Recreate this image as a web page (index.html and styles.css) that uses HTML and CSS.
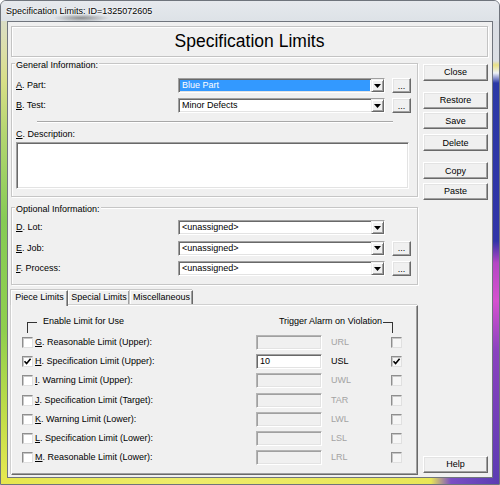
FILE: index.html
```html
<!DOCTYPE html>
<html lang="en">
<head>
  <meta charset="UTF-8">
  <title>Specification Limits</title>
  <link rel="stylesheet" href="styles.css">
</head>
<body>

  <div class="window">
    <div class="titlebar">Specification Limits: ID=1325072605</div>

    <div class="client">
      <div class="banner">Specification Limits</div>

      <div class="main">
        <div class="left">

          <div class="group general">
            <div class="group-title">General Information:</div>
            <div class="field-row first">
              <span class="field-label"><u>A</u>. Part:</span>
              <div class="combo selected">
                <span class="combo-text">Blue Part</span>
                <span class="combo-btn"><svg width="7" height="4" viewBox="0 0 7 4"><path d="M0 0h7L3.5 4z" fill="#000"/></svg></span>
              </div>
              <button class="dots" type="button">...</button>
            </div>
            <div class="field-row">
              <span class="field-label"><u>B</u>. Test:</span>
              <div class="combo">
                <span class="combo-text">Minor Defects</span>
                <span class="combo-btn"><svg width="7" height="4" viewBox="0 0 7 4"><path d="M0 0h7L3.5 4z" fill="#000"/></svg></span>
              </div>
              <button class="dots" type="button">...</button>
            </div>
            <div class="separator"></div>
            <span class="field-label desc-label"><u>C</u>. Description:</span>
            <div class="textarea"></div>
          </div>

          <div class="group optional">
            <div class="group-title">Optional Information:</div>
            <div class="field-row first">
              <span class="field-label"><u>D</u>. Lot:</span>
              <div class="combo">
                <span class="combo-text">&lt;unassigned&gt;</span>
                <span class="combo-btn"><svg width="7" height="4" viewBox="0 0 7 4"><path d="M0 0h7L3.5 4z" fill="#000"/></svg></span>
              </div>
            </div>
            <div class="field-row loose">
              <span class="field-label"><u>E</u>. Job:</span>
              <div class="combo">
                <span class="combo-text">&lt;unassigned&gt;</span>
                <span class="combo-btn"><svg width="7" height="4" viewBox="0 0 7 4"><path d="M0 0h7L3.5 4z" fill="#000"/></svg></span>
              </div>
              <button class="dots" type="button">...</button>
            </div>
            <div class="field-row loose">
              <span class="field-label"><u>F</u>. Process:</span>
              <div class="combo">
                <span class="combo-text">&lt;unassigned&gt;</span>
                <span class="combo-btn"><svg width="7" height="4" viewBox="0 0 7 4"><path d="M0 0h7L3.5 4z" fill="#000"/></svg></span>
              </div>
              <button class="dots" type="button">...</button>
            </div>
          </div>

          <div class="tabs">
            <div class="tab active tab-piece">Piece Limits</div>
            <div class="tab tab-special">Special Limits</div>
            <div class="tab tab-misc">Miscellaneous</div>
          </div>

          <div class="panel">
            <div class="limit-head">
              <span class="bracket left"></span>
              <span class="head-text">Enable Limit for Use</span>
              <span class="head-text trigger">Trigger Alarm on Violation</span>
              <span class="bracket right"></span>
            </div>

            <div class="limit-row">
              <span class="check"></span>
              <span class="limit-label"><u>G</u>. Reasonable Limit (Upper):</span>
              <span class="value"></span>
              <span class="abbr">URL</span>
              <span class="check alarm"></span>
            </div>
            <div class="limit-row">
              <span class="check"><svg width="9" height="9" viewBox="0 0 9 9"><path d="M1.5 4.2 3.6 6.5 7.6 1.8" fill="none" stroke="#000" stroke-width="1.6"/></svg></span>
              <span class="limit-label"><u>H</u>. Specification Limit (Upper):</span>
              <span class="value on">10</span>
              <span class="abbr on">USL</span>
              <span class="check alarm"><svg width="9" height="9" viewBox="0 0 9 9"><path d="M1.5 4.2 3.6 6.5 7.6 1.8" fill="none" stroke="#000" stroke-width="1.6"/></svg></span>
            </div>
            <div class="limit-row">
              <span class="check"></span>
              <span class="limit-label"><u>I</u>. Warning Limit (Upper):</span>
              <span class="value"></span>
              <span class="abbr">UWL</span>
              <span class="check alarm"></span>
            </div>
            <div class="limit-row">
              <span class="check"></span>
              <span class="limit-label"><u>J</u>. Specification Limit (Target):</span>
              <span class="value"></span>
              <span class="abbr">TAR</span>
              <span class="check alarm"></span>
            </div>
            <div class="limit-row">
              <span class="check"></span>
              <span class="limit-label"><u>K</u>. Warning Limit (Lower):</span>
              <span class="value"></span>
              <span class="abbr">LWL</span>
              <span class="check alarm"></span>
            </div>
            <div class="limit-row">
              <span class="check"></span>
              <span class="limit-label"><u>L</u>. Specification Limit (Lower):</span>
              <span class="value"></span>
              <span class="abbr">LSL</span>
              <span class="check alarm"></span>
            </div>
            <div class="limit-row">
              <span class="check"></span>
              <span class="limit-label"><u>M</u>. Reasonable Limit (Lower):</span>
              <span class="value"></span>
              <span class="abbr">LRL</span>
              <span class="check alarm"></span>
            </div>
          </div>

        </div>

        <div class="side">
          <button class="btn btn-close" type="button">Close</button>
          <button class="btn gap-lg" type="button">Restore</button>
          <button class="btn gap-xs" type="button">Save</button>
          <button class="btn gap-sm" type="button">Delete</button>
          <button class="btn gap-lg" type="button">Copy</button>
          <button class="btn gap-xs" type="button">Paste</button>
          <button class="btn btn-help" type="button">Help</button>
        </div>
      </div>
    </div>
  </div>

</body>
</html>
```

FILE: styles.css
```css
* { box-sizing: border-box; }

body {
  margin: 0;
  font-family: "Liberation Sans", Arial, sans-serif;
  font-size: 9px;
  color: #000;
  background: #fff;
}

/* outer window frame, glass edges show the desktop colours */
.window {
  width: 500px;
  height: 485px;
  display: flex;
  flex-direction: column;
  border: 1px solid #6f747c;
  border-radius: 6px 6px 0 0;
  overflow: hidden;
  background:
    linear-gradient(to right, #e6e64c 0, #eeec6a 180px, #e8e656 430px, #7b4fc4 450px, #5a3bb2 500px) left bottom / 100% 6px no-repeat,
    linear-gradient(to bottom, #d9dcd9 0, #dcdfa8 50px, #d8df88 80px, #b6d672 130px, #86cb55 220px, #8fcf4e 330px, #c4de49 420px, #e9ea52 484px) left top / 6px 100% no-repeat,
    linear-gradient(to bottom, #d9dde3 0, #dcdfe4 60px, #e9e184 64px, #eef1f6 72px, #2b39a6 82px, #3034a8 240px, #b447c4 262px, #d552cf 300px, #8a42bf 350px, #5a3cb3 484px) right top / 6px 100% no-repeat,
    #dfe3e8;
}

.titlebar {
  height: 20px;
  padding-left: 5px;
  line-height: 20px;
  background:
    radial-gradient(ellipse 28px 4px at 80px 17px, rgba(60,60,60,.5), rgba(60,60,60,0)),
    linear-gradient(to bottom, #e6e9ed, #dde2e7);
  text-shadow: 0 0 3px #fff, 0 0 2px #fff;
}

.client {
  flex: 1;
  display: flex;
  flex-direction: column;
  margin: 0 6px 6px;
  padding: 4px 4px 2px 3px;
  border: 1px solid #70757d;
  background: #f0f0f0;
}

.banner {
  height: 31px;
  border: 1px solid #c3c3c3;
  box-shadow: inset 1px 1px 0 #fff, 1px 1px 0 #fff;
  text-align: center;
  line-height: 29px;
  font-size: 17.5px;
}

.main {
  flex: 1;
  display: flex;
  gap: 5px;
  margin-top: 5px;
}
.left {
  width: 407px;
  display: flex;
  flex-direction: column;
}
.side {
  width: 65px;
  display: flex;
  flex-direction: column;
}

/* group boxes */
.group {
  border: 1px solid #c6c6c6;
  box-shadow: inset 1px 1px 0 #fff, 1px 1px 0 #fff;
  padding-left: 4px;
}
.general { margin-top: 1px; height: 134px; }
.optional { margin-top: 10px; height: 78px; }

.group-title {
  width: fit-content;
  margin: -4px 0 0 -1px;
  padding: 0 1px;
  line-height: 11px;
  background: #f0f0f0;
}

.field-row {
  display: flex;
  align-items: center;
  height: 15px;
  margin-top: 5px;
}
.field-row.first { margin-top: 7px; }
.optional .field-row.first { margin-top: 5px; }
.field-row.loose { margin-top: 5.5px; }

.field-label {
  width: 162px;
  line-height: 11px;
}
.desc-label {
  display: block;
  margin-top: 6px;
}

.sunken {
  border: 1px solid;
}

.combo, .textarea, .value {
  border: 1px solid;
  border-color: #a0a0a0 #fff #fff #a0a0a0;
  box-shadow: inset 1px 1px 0 #696969, inset -1px -1px 0 #e3e3e3;
}

.combo {
  width: 207px;
  height: 15px;
  display: flex;
  background: #fff;
}
.combo-text {
  flex: 1;
  margin: 1px 1px 1px 1px;
  padding-left: 2px;
  line-height: 11px;
  white-space: nowrap;
}
.combo.selected .combo-text {
  background: #3399ff;
  color: #fff;
}
.combo-btn {
  width: 13px;
  height: 13px;
  display: flex;
  align-items: center;
  justify-content: center;
  background: #f0f0f0;
  border: 1px solid;
  border-color: #f0f0f0 #696969 #696969 #f0f0f0;
  box-shadow: inset 1px 1px 0 #fff, inset -1px -1px 0 #a0a0a0;
}

.separator {
  width: 356px;
  height: 2px;
  margin: 8px 0 0 21px;
  border-top: 1px solid #a8a8a8;
  border-bottom: 1px solid #fff;
}

.textarea {
  width: 393px;
  height: 47px;
  margin-top: 2px;
  background: #fff;
}

/* raised push buttons */
.btn, .dots {
  padding: 0;
  font-family: inherit;
  font-size: 9px;
  color: #000;
  background: #f0f0f0;
  border: 1px solid;
  border-color: #fff #696969 #696969 #fff;
  box-shadow: inset -1px -1px 0 #a0a0a0, inset 1px 1px 0 #e3e3e3;
}
.dots {
  width: 19px;
  height: 15px;
  margin-left: 7px;
  padding-top: 1px;
  line-height: 11px;
}
.btn { height: 17px; }
.btn-close { margin-top: 1.5px; }
.gap-lg { margin-top: 11px; }
.gap-sm { margin-top: 5px; }
.gap-xs { margin-top: 3.5px; }
.btn-help { margin-top: auto; margin-bottom: 2.5px; }

/* tab control */
.tabs {
  display: flex;
  height: 15px;
  margin-top: 5px;
}
.tab {
  height: 15px;
  border: 1px solid;
  border-bottom: 0;
  border-color: #fff #696969 #fff #fff;
  box-shadow: inset -1px 0 0 #a0a0a0, -1px -1px 0 #c8c8c8;
  text-align: center;
  line-height: 13px;
  background: #f0f0f0;
}
.tab.active {
  position: relative;
  height: 16px;
}
.tab-piece { width: 57px; }
.tab-special { width: 62px; }
.tab-misc { width: 63px; }

.panel {
  height: 170px;
  border: 1px solid;
  border-color: #fff #696969 #696969 #fff;
  box-shadow: inset -1px -1px 0 #a0a0a0, -1px -1px 0 #d0d0d0;
}

.limit-head {
  display: flex;
  align-items: flex-start;
  height: 26.5px;
  padding: 10px 24px 0 15px;
}
.head-text { line-height: 11px; }
.head-text.trigger { margin-left: auto; }
.bracket {
  width: 10px;
  height: 11px;
  margin-top: 5.5px;
  border-top: 1px solid #333;
}
.bracket.left {
  border-left: 1px solid #333;
  margin-right: 6px;
}
.bracket.right {
  border-right: 1px solid #333;
  margin-left: 1px;
}

.limit-row {
  display: grid;
  grid-template-columns: 11px 223px 66px 69px 11px;
  align-items: center;
  height: 19.3px;
  padding-left: 10px;
}
.limit-label {
  padding-left: 2px;
  white-space: nowrap;
  line-height: 11px;
}

.check {
  width: 11px;
  height: 11px;
  display: flex;
  align-items: center;
  justify-content: center;
  background: #fff;
  border: 1px solid;
  border-color: #8e8e8e #e0e0e0 #e0e0e0 #8e8e8e;
  box-shadow: inset 1px 1px 0 #c8c8c8;
}
.check.alarm { background: #f6f6f6; }

.value {
  height: 15px;
  padding-left: 3px;
  line-height: 13px;
  background: #f0f0f0;
  border-color: #b4b4b4 #fff #fff #b4b4b4;
  box-shadow: inset 1px 1px 0 #a0a0a0, inset -1px -1px 0 #e3e3e3;
}
.value.on {
  background: #fff;
  border-color: #a0a0a0 #fff #fff #a0a0a0;
  box-shadow: inset 1px 1px 0 #696969, inset -1px -1px 0 #e3e3e3;
}

.abbr {
  padding-left: 9px;
  line-height: 11px;
  color: #a3a3a3;
}
.abbr.on { color: #000; }
```
